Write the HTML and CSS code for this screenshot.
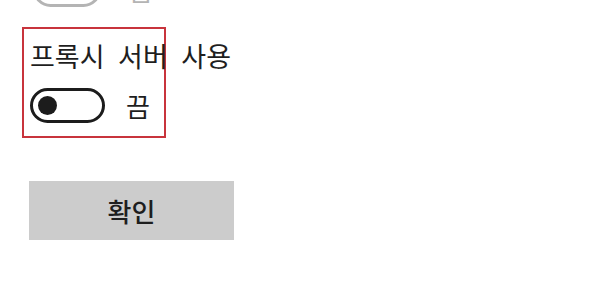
FILE: index.html
```html
<!DOCTYPE html>
<html lang="ko">
<head>
<meta charset="utf-8">
<link rel="stylesheet" href="styles.css">
</head>
<body>
<div class="page">
  <div class="prev-row">
    <span class="toggle toggle-disabled"><span class="knob"></span></span>
    <span class="state state-disabled">끔</span>
  </div>
  <div class="group">
    <div class="label">프록시 서버 사용</div>
    <div class="toggle-row">
      <span class="toggle"><span class="knob"></span></span>
      <span class="state">끔</span>
    </div>
  </div>
  <button class="ok">확인</button>
</div>
</body>
</html>
```

FILE: styles.css
```css
html, body {
  margin: 0;
  padding: 0;
  background: #ffffff;
}
.page {
  width: 600px;
  height: 307px;
  overflow: hidden;
  padding-left: 22px;
  box-sizing: border-box;
  font-family: "Noto Sans CJK KR", "Noto Sans", sans-serif;
  color: #1e1e1e;
}
.prev-row {
  display: flex;
  align-items: center;
  height: 35px;
  margin-top: -28px;
  padding-left: 11px;
}
.toggle {
  display: flex;
  align-items: center;
  box-sizing: border-box;
  width: 75px;
  height: 35px;
  border: 3px solid #1c1c1c;
  border-radius: 18px;
  padding-left: 5px;
}
.knob {
  width: 19px;
  height: 19px;
  border-radius: 50%;
  background: #1c1c1c;
}
.toggle-disabled {
  width: 68px;
  border-color: #b4b4b4;
}
.toggle-disabled .knob {
  background: #c0c0c0;
}
.state {
  font-size: 26px;
  line-height: 30px;
  margin-left: 21px;
}
.state-disabled {
  color: #b4b4b4;
  margin-left: 28px;
}
.group {
  box-sizing: border-box;
  width: 144px;
  height: 111px;
  margin-top: 20px;
  border: 2px solid #c8343c;
  padding-left: 6px;
}
.label {
  white-space: nowrap;
  font-size: 27px;
  line-height: 30px;
  margin-top: 12px;
  word-spacing: 6px;
}
.toggle-row {
  display: flex;
  align-items: center;
  margin-top: 17px;
}
.ok {
  display: block;
  margin-top: 43px;
  margin-left: 7px;
  width: 205px;
  height: 59px;
  border: none;
  background: #cccccc;
  font-family: "Noto Sans CJK KR", "Noto Sans", sans-serif;
  font-size: 26px;
  font-weight: 500;
  color: #1e1e1e;
  padding: 0;
}
```
